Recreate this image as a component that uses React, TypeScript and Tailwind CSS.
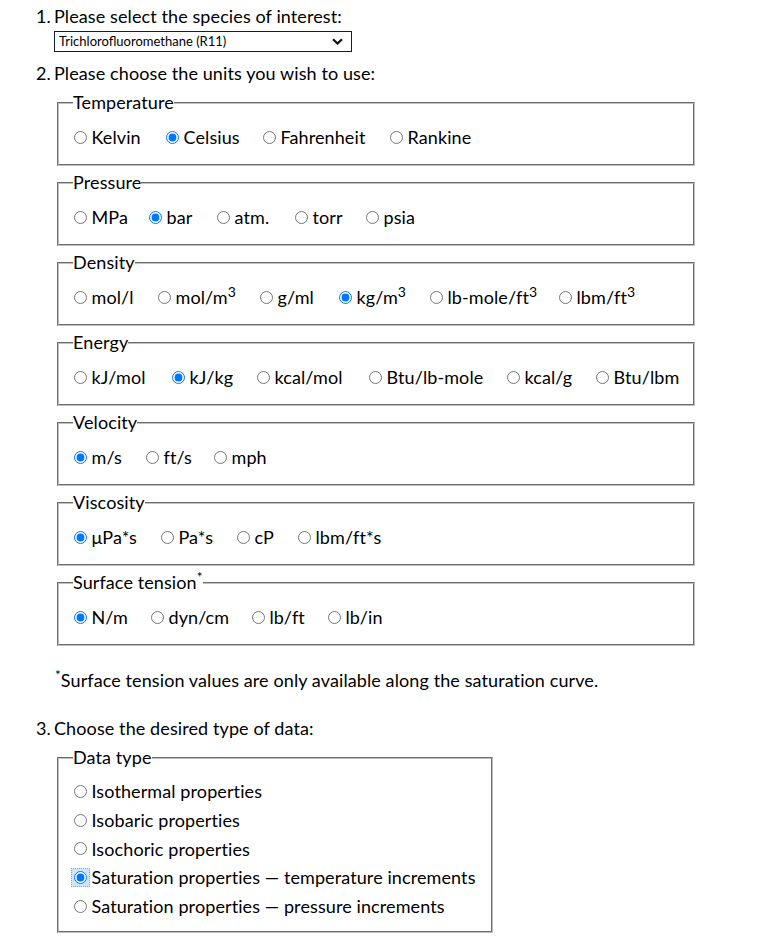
import React from "react";

type Opt = { label: React.ReactNode; w?: string; checked?: boolean };
type Group = { name: React.ReactNode; key: string; opts: Opt[] };

const sup3 = <sup className="text-[14px]">3</sup>;

const groups: Group[] = [
  {
    key: "temp",
    name: "Temperature",
    opts: [
      { label: "Kelvin", w: "w-[92px]" },
      { label: "Celsius", w: "w-[97px]", checked: true },
      { label: "Fahrenheit", w: "w-[127px]" },
      { label: "Rankine" },
    ],
  },
  {
    key: "press",
    name: "Pressure",
    opts: [
      { label: "MPa", w: "w-[75px]" },
      { label: "bar", w: "w-[68px]", checked: true },
      { label: "atm.", w: "w-[78px]" },
      { label: "torr", w: "w-[71px]" },
      { label: "psia" },
    ],
  },
  {
    key: "dens",
    name: "Density",
    opts: [
      { label: "mol/l", w: "w-[84px]" },
      { label: <>mol/m{sup3}</>, w: "w-[102px]" },
      { label: "g/ml", w: "w-[79px]" },
      { label: <>kg/m{sup3}</>, w: "w-[91px]", checked: true },
      { label: <>lb-mole/ft{sup3}</>, w: "w-[129px]" },
      { label: <>lbm/ft{sup3}</> },
    ],
  },
  {
    key: "energy",
    name: "Energy",
    opts: [
      { label: "kJ/mol", w: "w-[98px]" },
      { label: "kJ/kg", w: "w-[85px]", checked: true },
      { label: "kcal/mol", w: "w-[112px]" },
      { label: "Btu/lb-mole", w: "w-[138px]" },
      { label: "kcal/g", w: "w-[89px]" },
      { label: "Btu/lbm" },
    ],
  },
  {
    key: "vel",
    name: "Velocity",
    opts: [
      { label: "m/s", w: "w-[72px]", checked: true },
      { label: "ft/s", w: "w-[68px]" },
      { label: "mph" },
    ],
  },
  {
    key: "visc",
    name: "Viscosity",
    opts: [
      { label: "μPa*s", w: "w-[87px]", checked: true },
      { label: "Pa*s", w: "w-[76px]" },
      { label: "cP", w: "w-[61px]" },
      { label: "lbm/ft*s" },
    ],
  },
  {
    key: "surf",
    name: (
      <>
        Surface tension<sup>*</sup>
      </>
    ),
    opts: [
      { label: "N/m", w: "w-[77px]", checked: true },
      { label: "dyn/cm", w: "w-[101px]" },
      { label: "lb/ft", w: "w-[76px]" },
      { label: "lb/in" },
    ],
  },
];

const dataTypes = [
  "Isothermal properties",
  "Isobaric properties",
  "Isochoric properties",
  "Saturation properties — temperature increments",
  "Saturation properties — pressure increments",
];

function Radio({ name, checked }: { name: string; checked?: boolean }) {
  return (
    <input
      type="radio"
      name={name}
      defaultChecked={checked}
      className="m-0 h-[13px] w-[13px] shrink-0"
    />
  );
}

export default function App() {
  return (
    <div className="min-h-[941px] w-[761px] bg-white pl-[36px] pt-[2px] font-['Source_Sans_Pro','Lato',sans-serif] text-[18px] tracking-[0.1px] text-black">
      {/* 1 */}
      <div className="flex h-[29px] items-center leading-[29px]">
        <span className="w-[18px]">1.</span>
        <span>Please select the species of interest:</span>
      </div>
      <div className="ml-[18px] flex h-[21px] w-[298px] items-center justify-between border border-[#0f1d36] pl-[4px] pr-[8px] text-[13px] tracking-normal leading-none">
        <span>Trichlorofluoromethane (R11)</span>
        <svg width="11" height="7" viewBox="0 0 11 7" fill="none">
          <path d="M1 1.2 L5.5 5.5 L10 1.2" stroke="#111" strokeWidth="2.2" />
        </svg>
      </div>

      {/* 2 */}
      <div className="mt-[7px] flex h-[29px] items-center leading-[29px]">
        <span className="w-[18px]">2.</span>
        <span>Please choose the units you wish to use:</span>
      </div>
      <div className="ml-[21px] flex flex-col">
        {groups.map((g) => (
          <fieldset
            key={g.key}
            className="mb-[2px] w-[638px] border-2 border-[#c0c0c0] [border-style:groove] pb-[12px] pl-[14px] pt-[6px]"
          >
            <legend className="h-[29px] p-0 leading-[29px]">{g.name}</legend>
            <div className="flex h-[29px] items-center leading-[29px]">
              {g.opts.map((o, i) => (
                <label key={i} className={`flex items-center ${o.w ?? ""}`}>
                  <span className="ml-[0.5px] flex">
                    <Radio name={g.key} checked={o.checked} />
                  </span>
                  <span className="ml-[5px] whitespace-nowrap">{o.label}</span>
                </label>
              ))}
            </div>
          </fieldset>
        ))}
      </div>

      <div className="ml-[19px] mt-[18px] h-[29px] leading-[29px]">
        <sup>*</sup>Surface tension values are only available along the saturation curve.
      </div>

      {/* 3 */}
      <div className="mt-[19px] flex h-[29px] items-center leading-[29px]">
        <span className="w-[18px]">3.</span>
        <span>Choose the desired type of data:</span>
      </div>
      <fieldset className="ml-[21px] w-[436px] border-2 border-[#c0c0c0] [border-style:groove] pb-[10px] pl-[14px] pt-[5px]">
        <legend className="h-[29px] p-0 leading-[29px]">Data type</legend>
        <div className="flex flex-col">
          {dataTypes.map((d, i) => (
            <label key={i} className="flex h-[28.75px] items-center leading-[28.75px]">
              {i === 3 ? (
                <span className="-m-[3px] ml-[-2.5px] flex border border-dotted border-[#8aa8c8] bg-[#cde6fb] p-[2px]">
                  <Radio name="dtype" checked />
                </span>
              ) : (
                <span className="ml-[0.5px] flex">
                  <Radio name="dtype" />
                </span>
              )}
              <span className="ml-[5px] whitespace-nowrap">{d}</span>
            </label>
          ))}
        </div>
      </fieldset>
    </div>
  );
}
